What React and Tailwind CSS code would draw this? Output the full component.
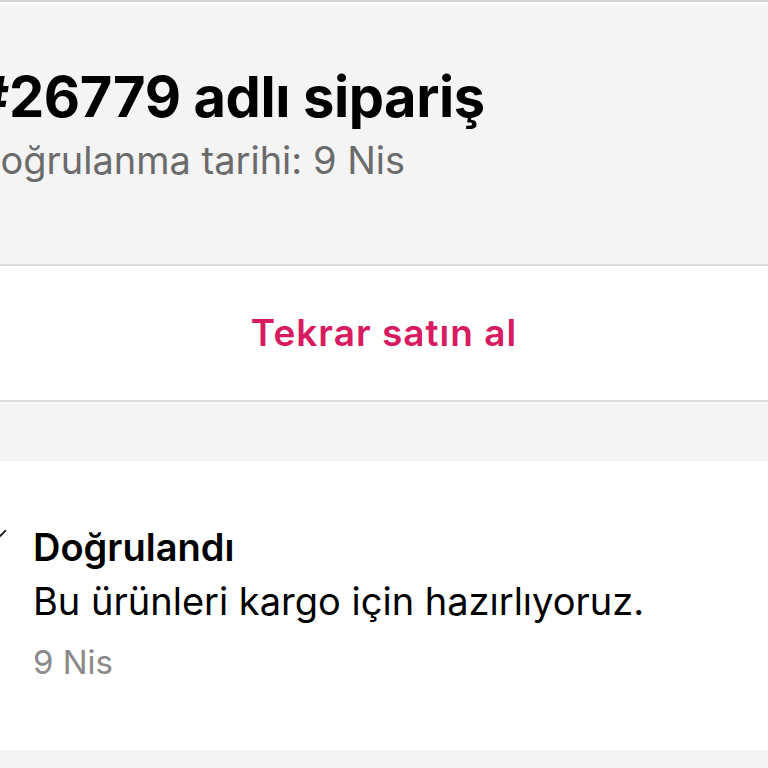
import React from 'react';

const CheckMark = () => (
  <svg width="40" height="40" viewBox="0 0 24 24" fill="none" stroke="#222" strokeWidth="1.2" strokeLinecap="round" strokeLinejoin="round" aria-hidden="true">
    <path d="M4 12.5l5 5L20 6.5" />
  </svg>
);

export default function App() {
  return (
    <div className="w-[768px] h-[768px] overflow-hidden bg-[#f4f4f4] font-['Inter',sans-serif] flex flex-col">
      {/* top edge */}
      <div className="h-[2px] bg-[#d4d4d4]" />
      <div className="h-[3px] bg-[#fbfbfb]" />

      {/* order header */}
      <div className="h-[259px] -ml-[27px] pt-[58px]">
        <h1 className="text-[56px] leading-[68px] font-bold text-black tracking-[-0.4px] whitespace-nowrap">#26779 adlı sipariş</h1>
        <p className="text-[38px] leading-[46px] text-[#6b6b6b] mt-[6px] whitespace-nowrap">Doğrulanma tarihi: 9 Nis</p>
      </div>

      {/* reorder button */}
      <div className="h-[2px] bg-[#dcdcdc]" />
      <div className="h-[134px] bg-white flex items-center justify-center">
        <span className="text-[37px] font-semibold tracking-[1px] text-[#d81b60]">Tekrar satın al</span>
      </div>
      <div className="h-[2px] bg-[#dcdcdc]" />
      <div className="h-[2px] bg-[#f9f9f9]" />
      <div className="h-[57px]" />

      {/* status timeline */}
      <div className="h-[289px] bg-white flex pt-[63px]">
        <div className="-ml-[28px] mt-[-4px] w-[56px] shrink-0">
          <CheckMark />
        </div>
        <div className="ml-[5px]">
          <p className="text-[38px] leading-[46px] font-semibold text-black">Doğrulandı</p>
          <p className="text-[38px] leading-[46px] text-black mt-[8px] whitespace-nowrap">Bu ürünleri kargo için hazırlıyoruz.</p>
          <p className="text-[33px] leading-[42px] text-[#8a8a8a] mt-[17px]">9 Nis</p>
        </div>
      </div>
    </div>
  );
}
